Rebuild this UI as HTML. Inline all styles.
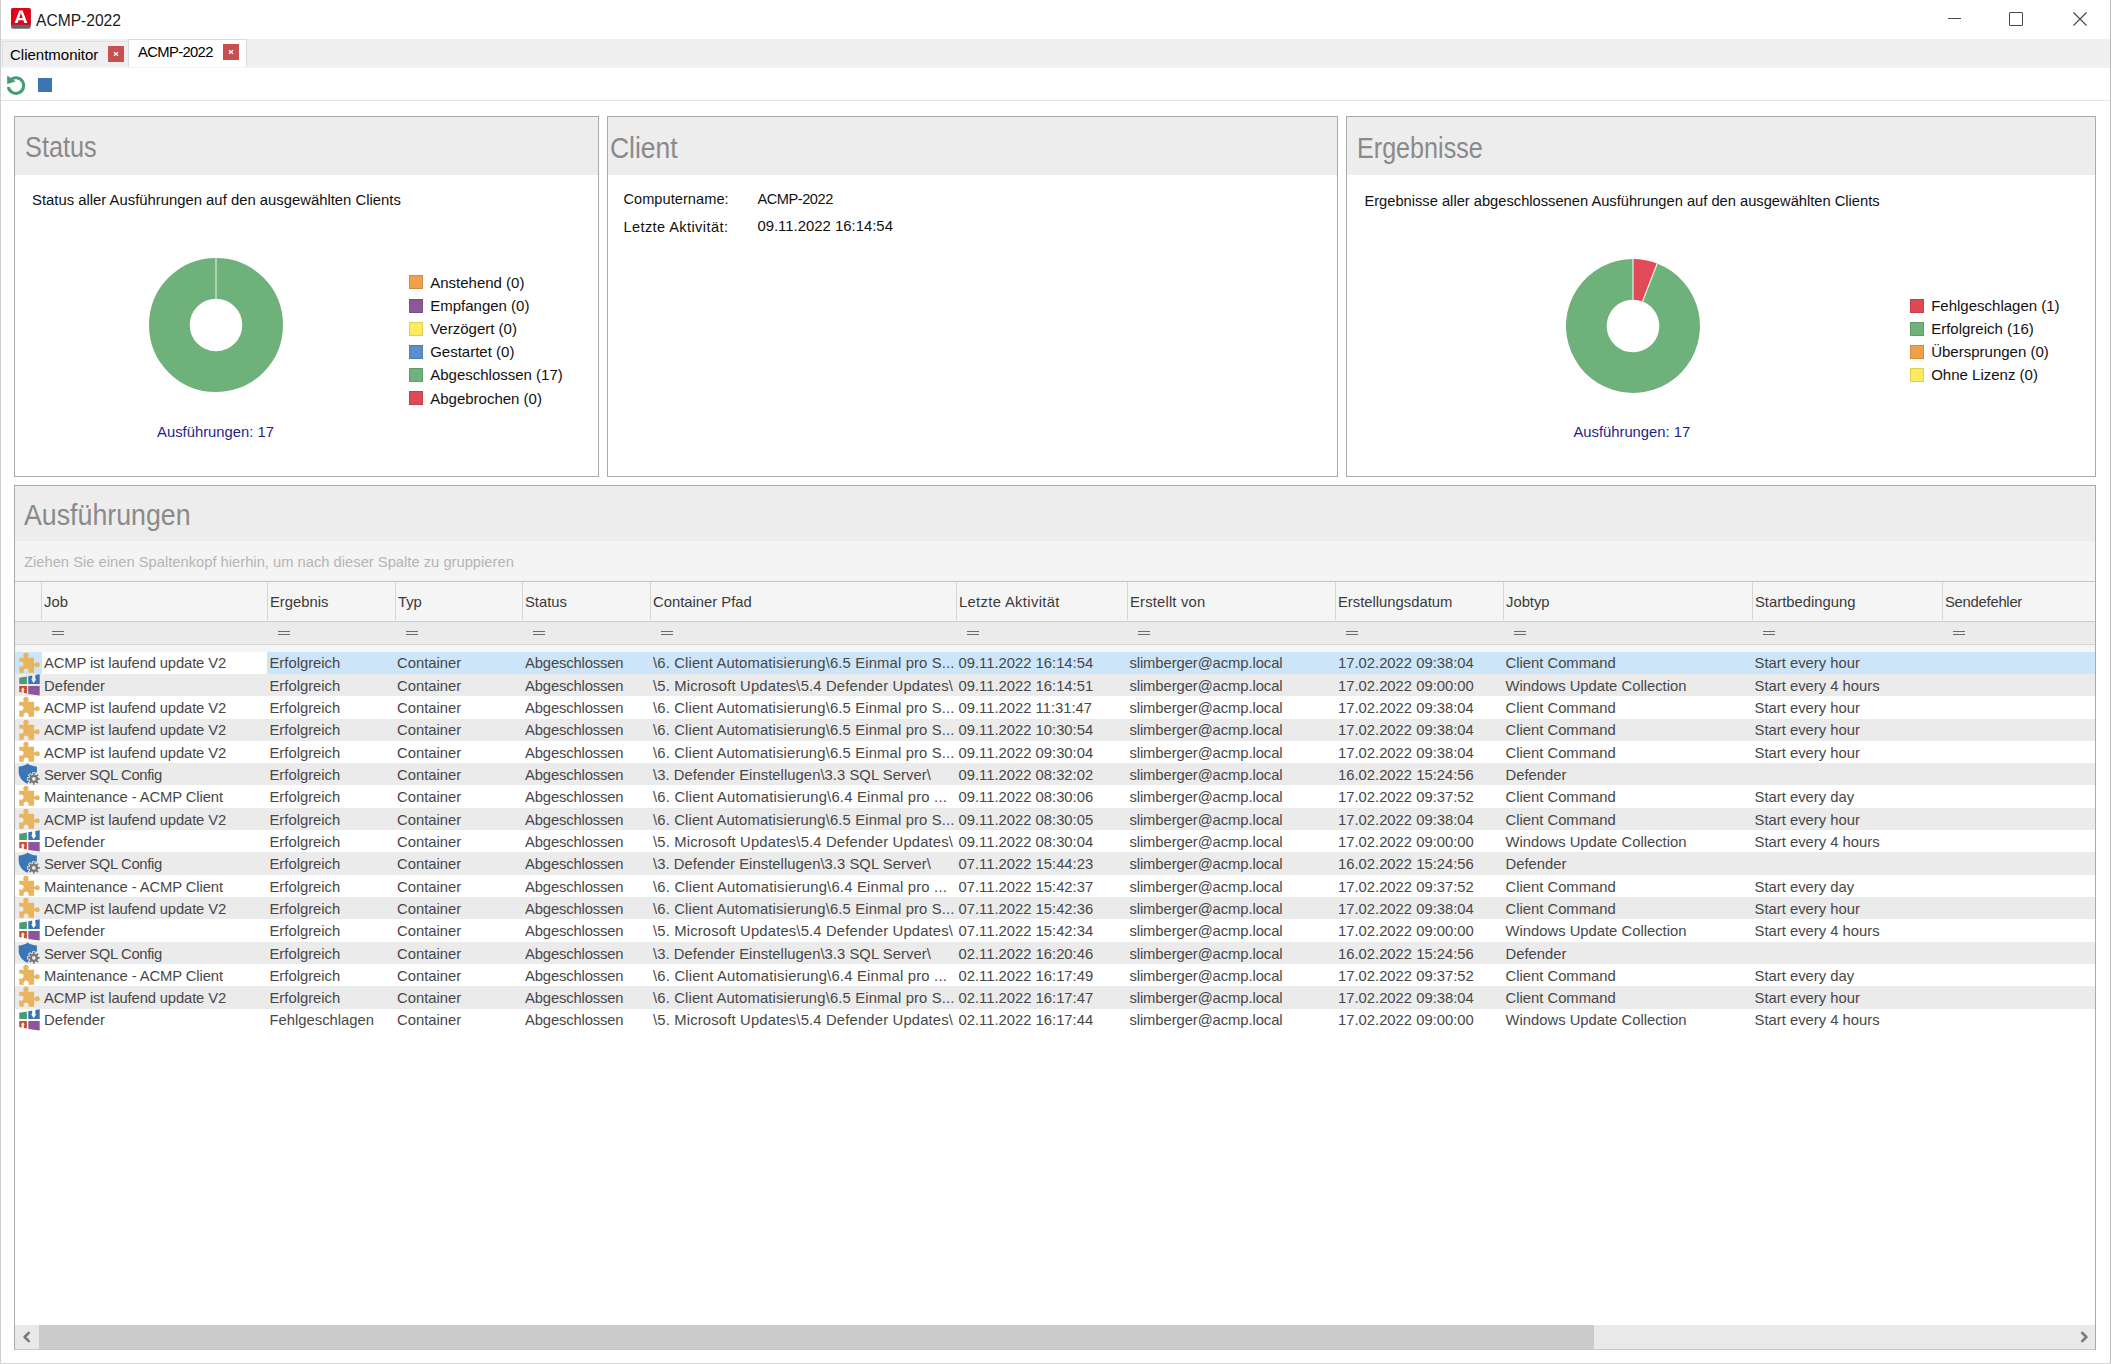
<!DOCTYPE html>
<html><head><meta charset="utf-8"><title>ACMP-2022</title>
<style>
html,body{margin:0;padding:0;}
body{width:2111px;height:1364px;position:relative;overflow:hidden;background:#fff;font-family:"Liberation Sans", sans-serif;}
body>div,body>svg{position:absolute;}
.t{white-space:nowrap;}
</style></head><body>
<div style="left:0px;top:0px;width:1px;height:1364px;background:#cfcfcf"></div>
<div style="left:2110px;top:0px;width:1px;height:1364px;background:#b8b8b8"></div>
<div style="left:0px;top:1363px;width:2111px;height:1px;background:#d6d6d6"></div>
<svg style="left:11px;top:8px" width="20" height="21" viewBox="0 0 20 21"><rect x="0" y="0" width="19.8" height="20.8" rx="2.2" fill="#656565"/><path d="M2.2 0 H17.6 A2.2 2.2 0 0 1 19.8 2.2 V16.8 H0 V2.2 A2.2 2.2 0 0 1 2.2 0 Z" fill="#e2001a"/><path d="M3.6 15 L8.3 2.6 L11.6 2.6 L16.3 15 L13.3 15 L12.4 12.3 L7.5 12.3 L6.6 15 Z M8.2 10 L11.7 10 L9.95 4.9 Z" fill="#fff"/></svg>
<div class="t" style="left:36px;top:12.79px;font-size:15.6px;line-height:15.6px;color:#1a1a1a;">ACMP-2022</div>
<div style="left:1948px;top:18px;width:13px;height:1.4px;background:#4a4a4a"></div>
<div style="left:2009px;top:12px;width:14px;height:14px;border:1.2px solid #4a4a4a;border-radius:1px;box-sizing:border-box"></div>
<svg style="left:2072px;top:11px" width="16" height="16" viewBox="0 0 16 16"><path d="M1.5 1.5 L14.5 14.5 M14.5 1.5 L1.5 14.5" stroke="#444" stroke-width="1.1"/></svg>
<div style="left:1px;top:39px;width:2109px;height:26px;background:#efefef"></div>
<div style="left:1px;top:65px;width:2109px;height:3px;background:#f3f3f3"></div>
<div style="left:2px;top:41px;width:126px;height:25px;background:#efefef;border-top:1px solid #e0e0e0;border-left:1px solid #e0e0e0;box-sizing:border-box"></div>
<div class="t" style="left:10px;top:47.00px;font-size:15px;line-height:15px;color:#000;">Clientmonitor</div>
<div style="left:108px;top:46px;width:16px;height:16px;background:#c94f4f"></div>
<svg style="left:108px;top:46px" width="16" height="16" viewBox="0 0 16 16"><path d="M6 6.3 L10 9.7 M10 6.3 L6 9.7" stroke="#fff" stroke-width="1.4"/></svg>
<div style="left:128px;top:39px;width:119px;height:28px;background:#fff;border:1px solid #dadada;border-bottom:none;box-sizing:border-box"></div>
<div class="t" style="left:138px;top:45.17px;font-size:14.8px;line-height:14.8px;color:#000;letter-spacing:-0.65px">ACMP-2022</div>
<div style="left:223px;top:44px;width:16px;height:16px;background:#c94f4f"></div>
<svg style="left:223px;top:44px" width="16" height="16" viewBox="0 0 16 16"><path d="M6 6.3 L10 9.7 M10 6.3 L6 9.7" stroke="#fff" stroke-width="1.4"/></svg>
<svg style="left:0px;top:70px" width="30" height="30" viewBox="0 70 30 30"><path d="M8.32 86.90 A7.75 7.75 0 1 0 11.18 79.44" fill="none" stroke="#479c74" stroke-width="3.1"/><path d="M7.2 75.5 L7.2 83.9 L15.7 81.4 Z" fill="#479c74"/></svg>
<div style="left:38px;top:78px;width:14px;height:14px;background:#3d74b2"></div>
<div style="left:1px;top:100px;width:2109px;height:1px;background:#e6e6e6"></div>
<div style="left:14px;top:116px;width:585px;height:361px;border:1px solid #aaaaaa;box-sizing:border-box;background:#fff"></div>
<div style="left:15px;top:117px;width:583px;height:58px;background:#ededed"></div>
<div style="left:607px;top:116px;width:731px;height:361px;border:1px solid #aaaaaa;box-sizing:border-box;background:#fff"></div>
<div style="left:608px;top:117px;width:729px;height:58px;background:#ededed"></div>
<div style="left:1346px;top:116px;width:750px;height:361px;border:1px solid #aaaaaa;box-sizing:border-box;background:#fff"></div>
<div style="left:1347px;top:117px;width:748px;height:58px;background:#ededed"></div>
<div class="t" style="left:24.8px;top:132.33px;font-size:29.5px;line-height:29.5px;color:#8a8a8a;transform:scaleX(0.858);transform-origin:0 0;">Status</div>
<div class="t" style="left:609.5px;top:132.63px;font-size:29.5px;line-height:29.5px;color:#8a8a8a;transform:scaleX(0.897);transform-origin:0 0;">Client</div>
<div class="t" style="left:1356.5px;top:132.63px;font-size:29.5px;line-height:29.5px;color:#8a8a8a;transform:scaleX(0.852);transform-origin:0 0;">Ergebnisse</div>
<div class="t" style="left:32px;top:193.13px;font-size:14.85px;line-height:14.85px;color:#111;">Status aller Ausführungen auf den ausgewählten Clients</div>
<div class="t" style="left:1364.4px;top:193.56px;font-size:14.7px;line-height:14.7px;color:#111;">Ergebnisse aller abgeschlossenen Ausführungen auf den ausgewählten Clients</div>
<div class="t" style="left:623.4px;top:191.64px;font-size:14.6px;line-height:14.6px;color:#111;letter-spacing:0.05px">Computername:</div>
<div class="t" style="left:757.4px;top:191.64px;font-size:14.6px;line-height:14.6px;color:#111;letter-spacing:-0.45px">ACMP-2022</div>
<div class="t" style="left:623.4px;top:219.64px;font-size:14.6px;line-height:14.6px;color:#111;letter-spacing:0.4px">Letzte Aktivität:</div>
<div class="t" style="left:757.4px;top:219.39px;font-size:14.9px;line-height:14.9px;color:#111;">09.11.2022 16:14:54</div>
<svg style="left:148.0px;top:257.0px" width="136" height="136" viewBox="-68 -68 136 136"><circle cx="0" cy="0" r="46.65" fill="none" stroke="#6eb17b" stroke-width="40.7"/><path d="M0 -67 L0 -26.3" stroke="#fff" stroke-width="0.9" opacity="0.95"/></svg>
<svg style="left:1564.6px;top:257.6px" width="136" height="136" viewBox="-68 -68 136 136"><path d="M24.203 -62.476 A67 67 0 1 1 0 -67 L0 -26.3 A26.3 26.3 0 1 0 9.501 -24.524 Z" fill="#6eb17b"/><path d="M0 -67 A67 67 0 0 1 24.203 -62.476 L9.501 -24.524 A26.3 26.3 0 0 0 0 -26.3 Z" fill="#e04b57"/><path d="M0 -67 L0 -26.3 M24.203 -62.476 L9.501 -24.524" stroke="#fff" stroke-width="1.1" opacity="0.95"/></svg>
<div class="t" style="left:157.1px;top:425.17px;font-size:14.8px;line-height:14.8px;color:#1f1f8f;">Ausführungen: 17</div>
<div class="t" style="left:1573.4px;top:424.87px;font-size:14.8px;line-height:14.8px;color:#1f1f8f;">Ausführungen: 17</div>
<div style="left:409px;top:275px;width:14px;height:14px;background:#f0a04b;box-sizing:border-box;border:1px solid rgba(0,0,0,0.12)"></div>
<div class="t" style="left:430.2px;top:275.30px;font-size:15.0px;line-height:15.0px;color:#111;">Anstehend (0)</div>
<div style="left:409px;top:299px;width:14px;height:14px;background:#8b5a96;box-sizing:border-box;border:1px solid rgba(0,0,0,0.12)"></div>
<div class="t" style="left:430.2px;top:298.30px;font-size:15.0px;line-height:15.0px;color:#111;">Empfangen (0)</div>
<div style="left:409px;top:322px;width:14px;height:14px;background:#fbec5d;box-sizing:border-box;border:1px solid rgba(0,0,0,0.12)"></div>
<div class="t" style="left:430.2px;top:321.30px;font-size:15.0px;line-height:15.0px;color:#111;">Verzögert (0)</div>
<div style="left:409px;top:345px;width:14px;height:14px;background:#5b8fd0;box-sizing:border-box;border:1px solid rgba(0,0,0,0.12)"></div>
<div class="t" style="left:430.2px;top:344.30px;font-size:15.0px;line-height:15.0px;color:#111;">Gestartet (0)</div>
<div style="left:409px;top:368px;width:14px;height:14px;background:#6eb17b;box-sizing:border-box;border:1px solid rgba(0,0,0,0.12)"></div>
<div class="t" style="left:430.2px;top:367.30px;font-size:15.0px;line-height:15.0px;color:#111;">Abgeschlossen (17)</div>
<div style="left:409px;top:391px;width:14px;height:14px;background:#dd4a55;box-sizing:border-box;border:1px solid rgba(0,0,0,0.12)"></div>
<div class="t" style="left:430.2px;top:391.30px;font-size:15.0px;line-height:15.0px;color:#111;">Abgebrochen (0)</div>
<div style="left:1910px;top:299px;width:14px;height:14px;background:#dd4a55;box-sizing:border-box;border:1px solid rgba(0,0,0,0.12)"></div>
<div class="t" style="left:1931.2px;top:298.30px;font-size:15.0px;line-height:15.0px;color:#111;">Fehlgeschlagen (1)</div>
<div style="left:1910px;top:322px;width:14px;height:14px;background:#6eb17b;box-sizing:border-box;border:1px solid rgba(0,0,0,0.12)"></div>
<div class="t" style="left:1931.2px;top:321.30px;font-size:15.0px;line-height:15.0px;color:#111;">Erfolgreich (16)</div>
<div style="left:1910px;top:345px;width:14px;height:14px;background:#f0a04b;box-sizing:border-box;border:1px solid rgba(0,0,0,0.12)"></div>
<div class="t" style="left:1931.2px;top:344.30px;font-size:15.0px;line-height:15.0px;color:#111;">Übersprungen (0)</div>
<div style="left:1910px;top:368px;width:14px;height:14px;background:#fbec5d;box-sizing:border-box;border:1px solid rgba(0,0,0,0.12)"></div>
<div class="t" style="left:1931.2px;top:367.30px;font-size:15.0px;line-height:15.0px;color:#111;">Ohne Lizenz (0)</div>
<div style="left:14px;top:485px;width:2082px;height:865px;border:1px solid #aaaaaa;box-sizing:border-box;background:#fff"></div>
<div style="left:15px;top:486px;width:2080px;height:55px;background:#ededed"></div>
<div class="t" style="left:24.4px;top:500.23px;font-size:29.5px;line-height:29.5px;color:#8a8a8a;transform:scaleX(0.907);transform-origin:0 0;">Ausführungen</div>
<div style="left:15px;top:541px;width:2080px;height:40px;background:#f4f4f4"></div>
<div class="t" style="left:24px;top:554.52px;font-size:14.74px;line-height:14.74px;color:#b4b4b4;">Ziehen Sie einen Spaltenkopf hierhin, um nach dieser Spalte zu gruppieren</div>
<div style="left:15px;top:581px;width:2080px;height:1px;background:#c4c4c4"></div>
<div style="left:15px;top:582px;width:2080px;height:39px;background:#f5f5f5"></div>
<div style="left:15px;top:621px;width:2080px;height:1px;background:#cccccc"></div>
<div style="left:15px;top:622px;width:2080px;height:22px;background:#ebebeb"></div>
<div style="left:15px;top:644px;width:2080px;height:1px;background:#d6d6d6"></div>
<div style="left:15px;top:645px;width:2080px;height:7px;background:#f5f5f5"></div>
<div style="left:41px;top:582px;width:1px;height:38px;background:#d6d6d6"></div>
<div style="left:267px;top:582px;width:1px;height:38px;background:#d6d6d6"></div>
<div style="left:395px;top:582px;width:1px;height:38px;background:#d6d6d6"></div>
<div style="left:522px;top:582px;width:1px;height:38px;background:#d6d6d6"></div>
<div style="left:650px;top:582px;width:1px;height:38px;background:#d6d6d6"></div>
<div style="left:956px;top:582px;width:1px;height:38px;background:#d6d6d6"></div>
<div style="left:1127px;top:582px;width:1px;height:38px;background:#d6d6d6"></div>
<div style="left:1335px;top:582px;width:1px;height:38px;background:#d6d6d6"></div>
<div style="left:1503px;top:582px;width:1px;height:38px;background:#d6d6d6"></div>
<div style="left:1752px;top:582px;width:1px;height:38px;background:#d6d6d6"></div>
<div style="left:1942px;top:582px;width:1px;height:38px;background:#d6d6d6"></div>
<div class="t" style="left:44px;top:595.47px;font-size:14.8px;line-height:14.8px;color:#3a3a3a;">Job</div>
<div style="left:52px;top:631px;width:12px;height:1px;background:#6a6a6a"></div>
<div style="left:52px;top:634px;width:12px;height:1px;background:#6a6a6a"></div>
<div class="t" style="left:270px;top:595.47px;font-size:14.8px;line-height:14.8px;color:#3a3a3a;">Ergebnis</div>
<div style="left:278px;top:631px;width:12px;height:1px;background:#6a6a6a"></div>
<div style="left:278px;top:634px;width:12px;height:1px;background:#6a6a6a"></div>
<div class="t" style="left:398px;top:595.47px;font-size:14.8px;line-height:14.8px;color:#3a3a3a;">Typ</div>
<div style="left:406px;top:631px;width:12px;height:1px;background:#6a6a6a"></div>
<div style="left:406px;top:634px;width:12px;height:1px;background:#6a6a6a"></div>
<div class="t" style="left:525px;top:595.47px;font-size:14.8px;line-height:14.8px;color:#3a3a3a;">Status</div>
<div style="left:533px;top:631px;width:12px;height:1px;background:#6a6a6a"></div>
<div style="left:533px;top:634px;width:12px;height:1px;background:#6a6a6a"></div>
<div class="t" style="left:653px;top:595.47px;font-size:14.8px;line-height:14.8px;color:#3a3a3a;">Container Pfad</div>
<div style="left:661px;top:631px;width:12px;height:1px;background:#6a6a6a"></div>
<div style="left:661px;top:634px;width:12px;height:1px;background:#6a6a6a"></div>
<div class="t" style="left:959px;top:595.47px;font-size:14.8px;line-height:14.8px;color:#3a3a3a;letter-spacing:0.33px">Letzte Aktivität</div>
<div style="left:967px;top:631px;width:12px;height:1px;background:#6a6a6a"></div>
<div style="left:967px;top:634px;width:12px;height:1px;background:#6a6a6a"></div>
<div class="t" style="left:1130px;top:595.47px;font-size:14.8px;line-height:14.8px;color:#3a3a3a;letter-spacing:0.18px">Erstellt von</div>
<div style="left:1138px;top:631px;width:12px;height:1px;background:#6a6a6a"></div>
<div style="left:1138px;top:634px;width:12px;height:1px;background:#6a6a6a"></div>
<div class="t" style="left:1338px;top:595.47px;font-size:14.8px;line-height:14.8px;color:#3a3a3a;">Erstellungsdatum</div>
<div style="left:1346px;top:631px;width:12px;height:1px;background:#6a6a6a"></div>
<div style="left:1346px;top:634px;width:12px;height:1px;background:#6a6a6a"></div>
<div class="t" style="left:1506px;top:595.47px;font-size:14.8px;line-height:14.8px;color:#3a3a3a;">Jobtyp</div>
<div style="left:1514px;top:631px;width:12px;height:1px;background:#6a6a6a"></div>
<div style="left:1514px;top:634px;width:12px;height:1px;background:#6a6a6a"></div>
<div class="t" style="left:1755px;top:595.47px;font-size:14.8px;line-height:14.8px;color:#3a3a3a;">Startbedingung</div>
<div style="left:1763px;top:631px;width:12px;height:1px;background:#6a6a6a"></div>
<div style="left:1763px;top:634px;width:12px;height:1px;background:#6a6a6a"></div>
<div class="t" style="left:1945px;top:595.47px;font-size:14.8px;line-height:14.8px;color:#3a3a3a;letter-spacing:-0.25px">Sendefehler</div>
<div style="left:1953px;top:631px;width:12px;height:1px;background:#6a6a6a"></div>
<div style="left:1953px;top:634px;width:12px;height:1px;background:#6a6a6a"></div>
<div style="left:15px;top:651.60px;width:2080px;height:22.31px;background:#cde5f8"></div>
<div style="left:42px;top:651.60px;width:225px;height:22.31px;background:#fff"></div>
<svg style="left:17.8px;top:651.60px" width="24" height="23" viewBox="-1 -1 24 23"><g fill="#e8b45e"><path d="M0.25 4.85 H15.1 V19.7 H9.2 A2.6 2.6 0 1 0 5.0 19.7 H0.25 V13.05 A2.6 2.6 0 1 0 0.25 9.2 Z"/><circle cx="6.95" cy="2.4" r="2.65"/><rect x="5.7" y="3.5" width="2.5" height="1.6"/><circle cx="18.2" cy="11.8" r="2.5"/><rect x="14.9" y="10.7" width="2" height="2.3"/></g></svg>
<div class="t" style="left:44px;top:656.47px;font-size:14.8px;line-height:14.8px;color:#474747;letter-spacing:-0.14px">ACMP ist laufend update V2</div>
<div class="t" style="left:269.5px;top:656.47px;font-size:14.8px;line-height:14.8px;color:#474747;">Erfolgreich</div>
<div class="t" style="left:397px;top:656.47px;font-size:14.8px;line-height:14.8px;color:#474747;">Container</div>
<div class="t" style="left:525px;top:656.47px;font-size:14.8px;line-height:14.8px;color:#474747;letter-spacing:-0.15px">Abgeschlossen</div>
<div class="t" style="left:653px;top:656.47px;font-size:14.8px;line-height:14.8px;color:#474747;letter-spacing:0.155px">\6. Client Automatisierung\6.5 Einmal pro S...</div>
<div class="t" style="left:958.5px;top:656.47px;font-size:14.8px;line-height:14.8px;color:#474747;">09.11.2022 16:14:54</div>
<div class="t" style="left:1129.4px;top:656.47px;font-size:14.8px;line-height:14.8px;color:#474747;letter-spacing:-0.08px">slimberger@acmp.local</div>
<div class="t" style="left:1338px;top:656.47px;font-size:14.8px;line-height:14.8px;color:#474747;">17.02.2022 09:38:04</div>
<div class="t" style="left:1505.5px;top:656.47px;font-size:14.8px;line-height:14.8px;color:#474747;">Client Command</div>
<div class="t" style="left:1754.6px;top:656.47px;font-size:14.8px;line-height:14.8px;color:#474747;">Start every hour</div>
<div style="left:15px;top:673.91px;width:2080px;height:22.31px;background:#ebebeb"></div>
<svg style="left:17.8px;top:673.91px" width="24" height="23" viewBox="-1 -1 24 23"><path fill="#4a9c78" d="M0.25 2.8 L7.9 1.6 V9 H0.25 Z"/><path fill="#3a74b6" d="M9.3 1.2 L13.2 0.52 V3.6 L12.3 4.5 L14.7 8.3 L17.1 4.5 L16.3 3.6 V-0.03 L20.7 -0.8 V9 H9.3 Z"/><path fill="#d14a2a" d="M0.25 10.9 H7.9 V18.4 L4.8 17.9 V15.4 L5.6 14.6 L3.9 12.3 L2.1 14.6 L2.7 15.4 V17.5 L0.25 17.1 Z"/><path fill="#8b55a0" d="M9.3 10.9 H20.7 V20.6 L9.3 19 Z"/></svg>
<div class="t" style="left:44px;top:678.78px;font-size:14.8px;line-height:14.8px;color:#474747;">Defender</div>
<div class="t" style="left:269.5px;top:678.78px;font-size:14.8px;line-height:14.8px;color:#474747;">Erfolgreich</div>
<div class="t" style="left:397px;top:678.78px;font-size:14.8px;line-height:14.8px;color:#474747;">Container</div>
<div class="t" style="left:525px;top:678.78px;font-size:14.8px;line-height:14.8px;color:#474747;letter-spacing:-0.15px">Abgeschlossen</div>
<div class="t" style="left:653px;top:678.78px;font-size:14.8px;line-height:14.8px;color:#474747;letter-spacing:0.17px">\5. Microsoft Updates\5.4 Defender Updates\</div>
<div class="t" style="left:958.5px;top:678.78px;font-size:14.8px;line-height:14.8px;color:#474747;">09.11.2022 16:14:51</div>
<div class="t" style="left:1129.4px;top:678.78px;font-size:14.8px;line-height:14.8px;color:#474747;letter-spacing:-0.08px">slimberger@acmp.local</div>
<div class="t" style="left:1338px;top:678.78px;font-size:14.8px;line-height:14.8px;color:#474747;">17.02.2022 09:00:00</div>
<div class="t" style="left:1505.5px;top:678.78px;font-size:14.8px;line-height:14.8px;color:#474747;">Windows Update Collection</div>
<div class="t" style="left:1754.6px;top:678.78px;font-size:14.8px;line-height:14.8px;color:#474747;">Start every 4 hours</div>
<div style="left:15px;top:696.22px;width:2080px;height:22.31px;background:#ffffff"></div>
<svg style="left:17.8px;top:696.22px" width="24" height="23" viewBox="-1 -1 24 23"><g fill="#e8b45e"><path d="M0.25 4.85 H15.1 V19.7 H9.2 A2.6 2.6 0 1 0 5.0 19.7 H0.25 V13.05 A2.6 2.6 0 1 0 0.25 9.2 Z"/><circle cx="6.95" cy="2.4" r="2.65"/><rect x="5.7" y="3.5" width="2.5" height="1.6"/><circle cx="18.2" cy="11.8" r="2.5"/><rect x="14.9" y="10.7" width="2" height="2.3"/></g></svg>
<div class="t" style="left:44px;top:701.09px;font-size:14.8px;line-height:14.8px;color:#474747;letter-spacing:-0.14px">ACMP ist laufend update V2</div>
<div class="t" style="left:269.5px;top:701.09px;font-size:14.8px;line-height:14.8px;color:#474747;">Erfolgreich</div>
<div class="t" style="left:397px;top:701.09px;font-size:14.8px;line-height:14.8px;color:#474747;">Container</div>
<div class="t" style="left:525px;top:701.09px;font-size:14.8px;line-height:14.8px;color:#474747;letter-spacing:-0.15px">Abgeschlossen</div>
<div class="t" style="left:653px;top:701.09px;font-size:14.8px;line-height:14.8px;color:#474747;letter-spacing:0.155px">\6. Client Automatisierung\6.5 Einmal pro S...</div>
<div class="t" style="left:958.5px;top:701.09px;font-size:14.8px;line-height:14.8px;color:#474747;">09.11.2022 11:31:47</div>
<div class="t" style="left:1129.4px;top:701.09px;font-size:14.8px;line-height:14.8px;color:#474747;letter-spacing:-0.08px">slimberger@acmp.local</div>
<div class="t" style="left:1338px;top:701.09px;font-size:14.8px;line-height:14.8px;color:#474747;">17.02.2022 09:38:04</div>
<div class="t" style="left:1505.5px;top:701.09px;font-size:14.8px;line-height:14.8px;color:#474747;">Client Command</div>
<div class="t" style="left:1754.6px;top:701.09px;font-size:14.8px;line-height:14.8px;color:#474747;">Start every hour</div>
<div style="left:15px;top:718.53px;width:2080px;height:22.31px;background:#ebebeb"></div>
<svg style="left:17.8px;top:718.53px" width="24" height="23" viewBox="-1 -1 24 23"><g fill="#e8b45e"><path d="M0.25 4.85 H15.1 V19.7 H9.2 A2.6 2.6 0 1 0 5.0 19.7 H0.25 V13.05 A2.6 2.6 0 1 0 0.25 9.2 Z"/><circle cx="6.95" cy="2.4" r="2.65"/><rect x="5.7" y="3.5" width="2.5" height="1.6"/><circle cx="18.2" cy="11.8" r="2.5"/><rect x="14.9" y="10.7" width="2" height="2.3"/></g></svg>
<div class="t" style="left:44px;top:723.40px;font-size:14.8px;line-height:14.8px;color:#474747;letter-spacing:-0.14px">ACMP ist laufend update V2</div>
<div class="t" style="left:269.5px;top:723.40px;font-size:14.8px;line-height:14.8px;color:#474747;">Erfolgreich</div>
<div class="t" style="left:397px;top:723.40px;font-size:14.8px;line-height:14.8px;color:#474747;">Container</div>
<div class="t" style="left:525px;top:723.40px;font-size:14.8px;line-height:14.8px;color:#474747;letter-spacing:-0.15px">Abgeschlossen</div>
<div class="t" style="left:653px;top:723.40px;font-size:14.8px;line-height:14.8px;color:#474747;letter-spacing:0.155px">\6. Client Automatisierung\6.5 Einmal pro S...</div>
<div class="t" style="left:958.5px;top:723.40px;font-size:14.8px;line-height:14.8px;color:#474747;">09.11.2022 10:30:54</div>
<div class="t" style="left:1129.4px;top:723.40px;font-size:14.8px;line-height:14.8px;color:#474747;letter-spacing:-0.08px">slimberger@acmp.local</div>
<div class="t" style="left:1338px;top:723.40px;font-size:14.8px;line-height:14.8px;color:#474747;">17.02.2022 09:38:04</div>
<div class="t" style="left:1505.5px;top:723.40px;font-size:14.8px;line-height:14.8px;color:#474747;">Client Command</div>
<div class="t" style="left:1754.6px;top:723.40px;font-size:14.8px;line-height:14.8px;color:#474747;">Start every hour</div>
<div style="left:15px;top:740.84px;width:2080px;height:22.31px;background:#ffffff"></div>
<svg style="left:17.8px;top:740.84px" width="24" height="23" viewBox="-1 -1 24 23"><g fill="#e8b45e"><path d="M0.25 4.85 H15.1 V19.7 H9.2 A2.6 2.6 0 1 0 5.0 19.7 H0.25 V13.05 A2.6 2.6 0 1 0 0.25 9.2 Z"/><circle cx="6.95" cy="2.4" r="2.65"/><rect x="5.7" y="3.5" width="2.5" height="1.6"/><circle cx="18.2" cy="11.8" r="2.5"/><rect x="14.9" y="10.7" width="2" height="2.3"/></g></svg>
<div class="t" style="left:44px;top:745.71px;font-size:14.8px;line-height:14.8px;color:#474747;letter-spacing:-0.14px">ACMP ist laufend update V2</div>
<div class="t" style="left:269.5px;top:745.71px;font-size:14.8px;line-height:14.8px;color:#474747;">Erfolgreich</div>
<div class="t" style="left:397px;top:745.71px;font-size:14.8px;line-height:14.8px;color:#474747;">Container</div>
<div class="t" style="left:525px;top:745.71px;font-size:14.8px;line-height:14.8px;color:#474747;letter-spacing:-0.15px">Abgeschlossen</div>
<div class="t" style="left:653px;top:745.71px;font-size:14.8px;line-height:14.8px;color:#474747;letter-spacing:0.155px">\6. Client Automatisierung\6.5 Einmal pro S...</div>
<div class="t" style="left:958.5px;top:745.71px;font-size:14.8px;line-height:14.8px;color:#474747;">09.11.2022 09:30:04</div>
<div class="t" style="left:1129.4px;top:745.71px;font-size:14.8px;line-height:14.8px;color:#474747;letter-spacing:-0.08px">slimberger@acmp.local</div>
<div class="t" style="left:1338px;top:745.71px;font-size:14.8px;line-height:14.8px;color:#474747;">17.02.2022 09:38:04</div>
<div class="t" style="left:1505.5px;top:745.71px;font-size:14.8px;line-height:14.8px;color:#474747;">Client Command</div>
<div class="t" style="left:1754.6px;top:745.71px;font-size:14.8px;line-height:14.8px;color:#474747;">Start every hour</div>
<div style="left:15px;top:763.15px;width:2080px;height:22.31px;background:#ebebeb"></div>
<svg style="left:17.8px;top:763.15px" width="24" height="23" viewBox="-1 -1 24 23"><path fill="#3b76b7" d="M8.6 -0.5 C6.6 1.2 3.5 2.3 -0.3 2.6 V8 C-0.3 12.5 3 17.3 8.4 19.7 L17.9 8 V2.6 C14.2 2.3 10.8 1.2 8.6 -0.5 Z"/><path fill="#787878" stroke="#ebebeb" stroke-width="1.6" paint-order="stroke" d="M13.15 10.93 L13.98 10.68 L13.96 8.96 L15.64 8.96 L15.62 10.68 L16.45 10.93 L17.20 11.34 L18.41 10.11 L19.59 11.29 L18.36 12.50 L18.77 13.25 L19.02 14.08 L20.74 14.06 L20.74 15.74 L19.02 15.72 L18.77 16.55 L18.36 17.30 L19.59 18.51 L18.41 19.69 L17.20 18.46 L16.45 18.87 L15.62 19.12 L15.64 20.84 L13.96 20.84 L13.98 19.12 L13.15 18.87 L12.40 18.46 L11.19 19.69 L10.01 18.51 L11.24 17.30 L10.83 16.55 L10.58 15.72 L8.86 15.74 L8.86 14.06 L10.58 14.08 L10.83 13.25 L11.24 12.50 L10.01 11.29 L11.19 10.11 L12.40 11.34 Z"/><circle cx="14.8" cy="14.9" r="1.8" fill="#eeeeee"/></svg>
<div class="t" style="left:44px;top:768.02px;font-size:14.8px;line-height:14.8px;color:#474747;letter-spacing:-0.34px">Server SQL Config</div>
<div class="t" style="left:269.5px;top:768.02px;font-size:14.8px;line-height:14.8px;color:#474747;">Erfolgreich</div>
<div class="t" style="left:397px;top:768.02px;font-size:14.8px;line-height:14.8px;color:#474747;">Container</div>
<div class="t" style="left:525px;top:768.02px;font-size:14.8px;line-height:14.8px;color:#474747;letter-spacing:-0.15px">Abgeschlossen</div>
<div class="t" style="left:653px;top:768.02px;font-size:14.8px;line-height:14.8px;color:#474747;letter-spacing:0.05px">\3. Defender Einstellugen\3.3 SQL Server\</div>
<div class="t" style="left:958.5px;top:768.02px;font-size:14.8px;line-height:14.8px;color:#474747;">09.11.2022 08:32:02</div>
<div class="t" style="left:1129.4px;top:768.02px;font-size:14.8px;line-height:14.8px;color:#474747;letter-spacing:-0.08px">slimberger@acmp.local</div>
<div class="t" style="left:1338px;top:768.02px;font-size:14.8px;line-height:14.8px;color:#474747;">16.02.2022 15:24:56</div>
<div class="t" style="left:1505.5px;top:768.02px;font-size:14.8px;line-height:14.8px;color:#474747;">Defender</div>
<div style="left:15px;top:785.46px;width:2080px;height:22.31px;background:#ffffff"></div>
<svg style="left:17.8px;top:785.46px" width="24" height="23" viewBox="-1 -1 24 23"><g fill="#e8b45e"><path d="M0.25 4.85 H15.1 V19.7 H9.2 A2.6 2.6 0 1 0 5.0 19.7 H0.25 V13.05 A2.6 2.6 0 1 0 0.25 9.2 Z"/><circle cx="6.95" cy="2.4" r="2.65"/><rect x="5.7" y="3.5" width="2.5" height="1.6"/><circle cx="18.2" cy="11.8" r="2.5"/><rect x="14.9" y="10.7" width="2" height="2.3"/></g></svg>
<div class="t" style="left:44px;top:790.33px;font-size:14.8px;line-height:14.8px;color:#474747;letter-spacing:-0.1px">Maintenance - ACMP Client</div>
<div class="t" style="left:269.5px;top:790.33px;font-size:14.8px;line-height:14.8px;color:#474747;">Erfolgreich</div>
<div class="t" style="left:397px;top:790.33px;font-size:14.8px;line-height:14.8px;color:#474747;">Container</div>
<div class="t" style="left:525px;top:790.33px;font-size:14.8px;line-height:14.8px;color:#474747;letter-spacing:-0.15px">Abgeschlossen</div>
<div class="t" style="left:653px;top:790.33px;font-size:14.8px;line-height:14.8px;color:#474747;letter-spacing:0.21px">\6. Client Automatisierung\6.4 Einmal pro ...</div>
<div class="t" style="left:958.5px;top:790.33px;font-size:14.8px;line-height:14.8px;color:#474747;">09.11.2022 08:30:06</div>
<div class="t" style="left:1129.4px;top:790.33px;font-size:14.8px;line-height:14.8px;color:#474747;letter-spacing:-0.08px">slimberger@acmp.local</div>
<div class="t" style="left:1338px;top:790.33px;font-size:14.8px;line-height:14.8px;color:#474747;">17.02.2022 09:37:52</div>
<div class="t" style="left:1505.5px;top:790.33px;font-size:14.8px;line-height:14.8px;color:#474747;">Client Command</div>
<div class="t" style="left:1754.6px;top:790.33px;font-size:14.8px;line-height:14.8px;color:#474747;">Start every day</div>
<div style="left:15px;top:807.77px;width:2080px;height:22.31px;background:#ebebeb"></div>
<svg style="left:17.8px;top:807.77px" width="24" height="23" viewBox="-1 -1 24 23"><g fill="#e8b45e"><path d="M0.25 4.85 H15.1 V19.7 H9.2 A2.6 2.6 0 1 0 5.0 19.7 H0.25 V13.05 A2.6 2.6 0 1 0 0.25 9.2 Z"/><circle cx="6.95" cy="2.4" r="2.65"/><rect x="5.7" y="3.5" width="2.5" height="1.6"/><circle cx="18.2" cy="11.8" r="2.5"/><rect x="14.9" y="10.7" width="2" height="2.3"/></g></svg>
<div class="t" style="left:44px;top:812.64px;font-size:14.8px;line-height:14.8px;color:#474747;letter-spacing:-0.14px">ACMP ist laufend update V2</div>
<div class="t" style="left:269.5px;top:812.64px;font-size:14.8px;line-height:14.8px;color:#474747;">Erfolgreich</div>
<div class="t" style="left:397px;top:812.64px;font-size:14.8px;line-height:14.8px;color:#474747;">Container</div>
<div class="t" style="left:525px;top:812.64px;font-size:14.8px;line-height:14.8px;color:#474747;letter-spacing:-0.15px">Abgeschlossen</div>
<div class="t" style="left:653px;top:812.64px;font-size:14.8px;line-height:14.8px;color:#474747;letter-spacing:0.155px">\6. Client Automatisierung\6.5 Einmal pro S...</div>
<div class="t" style="left:958.5px;top:812.64px;font-size:14.8px;line-height:14.8px;color:#474747;">09.11.2022 08:30:05</div>
<div class="t" style="left:1129.4px;top:812.64px;font-size:14.8px;line-height:14.8px;color:#474747;letter-spacing:-0.08px">slimberger@acmp.local</div>
<div class="t" style="left:1338px;top:812.64px;font-size:14.8px;line-height:14.8px;color:#474747;">17.02.2022 09:38:04</div>
<div class="t" style="left:1505.5px;top:812.64px;font-size:14.8px;line-height:14.8px;color:#474747;">Client Command</div>
<div class="t" style="left:1754.6px;top:812.64px;font-size:14.8px;line-height:14.8px;color:#474747;">Start every hour</div>
<div style="left:15px;top:830.08px;width:2080px;height:22.31px;background:#ffffff"></div>
<svg style="left:17.8px;top:830.08px" width="24" height="23" viewBox="-1 -1 24 23"><path fill="#4a9c78" d="M0.25 2.8 L7.9 1.6 V9 H0.25 Z"/><path fill="#3a74b6" d="M9.3 1.2 L13.2 0.52 V3.6 L12.3 4.5 L14.7 8.3 L17.1 4.5 L16.3 3.6 V-0.03 L20.7 -0.8 V9 H9.3 Z"/><path fill="#d14a2a" d="M0.25 10.9 H7.9 V18.4 L4.8 17.9 V15.4 L5.6 14.6 L3.9 12.3 L2.1 14.6 L2.7 15.4 V17.5 L0.25 17.1 Z"/><path fill="#8b55a0" d="M9.3 10.9 H20.7 V20.6 L9.3 19 Z"/></svg>
<div class="t" style="left:44px;top:834.95px;font-size:14.8px;line-height:14.8px;color:#474747;">Defender</div>
<div class="t" style="left:269.5px;top:834.95px;font-size:14.8px;line-height:14.8px;color:#474747;">Erfolgreich</div>
<div class="t" style="left:397px;top:834.95px;font-size:14.8px;line-height:14.8px;color:#474747;">Container</div>
<div class="t" style="left:525px;top:834.95px;font-size:14.8px;line-height:14.8px;color:#474747;letter-spacing:-0.15px">Abgeschlossen</div>
<div class="t" style="left:653px;top:834.95px;font-size:14.8px;line-height:14.8px;color:#474747;letter-spacing:0.17px">\5. Microsoft Updates\5.4 Defender Updates\</div>
<div class="t" style="left:958.5px;top:834.95px;font-size:14.8px;line-height:14.8px;color:#474747;">09.11.2022 08:30:04</div>
<div class="t" style="left:1129.4px;top:834.95px;font-size:14.8px;line-height:14.8px;color:#474747;letter-spacing:-0.08px">slimberger@acmp.local</div>
<div class="t" style="left:1338px;top:834.95px;font-size:14.8px;line-height:14.8px;color:#474747;">17.02.2022 09:00:00</div>
<div class="t" style="left:1505.5px;top:834.95px;font-size:14.8px;line-height:14.8px;color:#474747;">Windows Update Collection</div>
<div class="t" style="left:1754.6px;top:834.95px;font-size:14.8px;line-height:14.8px;color:#474747;">Start every 4 hours</div>
<div style="left:15px;top:852.39px;width:2080px;height:22.31px;background:#ebebeb"></div>
<svg style="left:17.8px;top:852.39px" width="24" height="23" viewBox="-1 -1 24 23"><path fill="#3b76b7" d="M8.6 -0.5 C6.6 1.2 3.5 2.3 -0.3 2.6 V8 C-0.3 12.5 3 17.3 8.4 19.7 L17.9 8 V2.6 C14.2 2.3 10.8 1.2 8.6 -0.5 Z"/><path fill="#787878" stroke="#ebebeb" stroke-width="1.6" paint-order="stroke" d="M13.15 10.93 L13.98 10.68 L13.96 8.96 L15.64 8.96 L15.62 10.68 L16.45 10.93 L17.20 11.34 L18.41 10.11 L19.59 11.29 L18.36 12.50 L18.77 13.25 L19.02 14.08 L20.74 14.06 L20.74 15.74 L19.02 15.72 L18.77 16.55 L18.36 17.30 L19.59 18.51 L18.41 19.69 L17.20 18.46 L16.45 18.87 L15.62 19.12 L15.64 20.84 L13.96 20.84 L13.98 19.12 L13.15 18.87 L12.40 18.46 L11.19 19.69 L10.01 18.51 L11.24 17.30 L10.83 16.55 L10.58 15.72 L8.86 15.74 L8.86 14.06 L10.58 14.08 L10.83 13.25 L11.24 12.50 L10.01 11.29 L11.19 10.11 L12.40 11.34 Z"/><circle cx="14.8" cy="14.9" r="1.8" fill="#eeeeee"/></svg>
<div class="t" style="left:44px;top:857.26px;font-size:14.8px;line-height:14.8px;color:#474747;letter-spacing:-0.34px">Server SQL Config</div>
<div class="t" style="left:269.5px;top:857.26px;font-size:14.8px;line-height:14.8px;color:#474747;">Erfolgreich</div>
<div class="t" style="left:397px;top:857.26px;font-size:14.8px;line-height:14.8px;color:#474747;">Container</div>
<div class="t" style="left:525px;top:857.26px;font-size:14.8px;line-height:14.8px;color:#474747;letter-spacing:-0.15px">Abgeschlossen</div>
<div class="t" style="left:653px;top:857.26px;font-size:14.8px;line-height:14.8px;color:#474747;letter-spacing:0.05px">\3. Defender Einstellugen\3.3 SQL Server\</div>
<div class="t" style="left:958.5px;top:857.26px;font-size:14.8px;line-height:14.8px;color:#474747;">07.11.2022 15:44:23</div>
<div class="t" style="left:1129.4px;top:857.26px;font-size:14.8px;line-height:14.8px;color:#474747;letter-spacing:-0.08px">slimberger@acmp.local</div>
<div class="t" style="left:1338px;top:857.26px;font-size:14.8px;line-height:14.8px;color:#474747;">16.02.2022 15:24:56</div>
<div class="t" style="left:1505.5px;top:857.26px;font-size:14.8px;line-height:14.8px;color:#474747;">Defender</div>
<div style="left:15px;top:874.70px;width:2080px;height:22.31px;background:#ffffff"></div>
<svg style="left:17.8px;top:874.70px" width="24" height="23" viewBox="-1 -1 24 23"><g fill="#e8b45e"><path d="M0.25 4.85 H15.1 V19.7 H9.2 A2.6 2.6 0 1 0 5.0 19.7 H0.25 V13.05 A2.6 2.6 0 1 0 0.25 9.2 Z"/><circle cx="6.95" cy="2.4" r="2.65"/><rect x="5.7" y="3.5" width="2.5" height="1.6"/><circle cx="18.2" cy="11.8" r="2.5"/><rect x="14.9" y="10.7" width="2" height="2.3"/></g></svg>
<div class="t" style="left:44px;top:879.57px;font-size:14.8px;line-height:14.8px;color:#474747;letter-spacing:-0.1px">Maintenance - ACMP Client</div>
<div class="t" style="left:269.5px;top:879.57px;font-size:14.8px;line-height:14.8px;color:#474747;">Erfolgreich</div>
<div class="t" style="left:397px;top:879.57px;font-size:14.8px;line-height:14.8px;color:#474747;">Container</div>
<div class="t" style="left:525px;top:879.57px;font-size:14.8px;line-height:14.8px;color:#474747;letter-spacing:-0.15px">Abgeschlossen</div>
<div class="t" style="left:653px;top:879.57px;font-size:14.8px;line-height:14.8px;color:#474747;letter-spacing:0.21px">\6. Client Automatisierung\6.4 Einmal pro ...</div>
<div class="t" style="left:958.5px;top:879.57px;font-size:14.8px;line-height:14.8px;color:#474747;">07.11.2022 15:42:37</div>
<div class="t" style="left:1129.4px;top:879.57px;font-size:14.8px;line-height:14.8px;color:#474747;letter-spacing:-0.08px">slimberger@acmp.local</div>
<div class="t" style="left:1338px;top:879.57px;font-size:14.8px;line-height:14.8px;color:#474747;">17.02.2022 09:37:52</div>
<div class="t" style="left:1505.5px;top:879.57px;font-size:14.8px;line-height:14.8px;color:#474747;">Client Command</div>
<div class="t" style="left:1754.6px;top:879.57px;font-size:14.8px;line-height:14.8px;color:#474747;">Start every day</div>
<div style="left:15px;top:897.01px;width:2080px;height:22.31px;background:#ebebeb"></div>
<svg style="left:17.8px;top:897.01px" width="24" height="23" viewBox="-1 -1 24 23"><g fill="#e8b45e"><path d="M0.25 4.85 H15.1 V19.7 H9.2 A2.6 2.6 0 1 0 5.0 19.7 H0.25 V13.05 A2.6 2.6 0 1 0 0.25 9.2 Z"/><circle cx="6.95" cy="2.4" r="2.65"/><rect x="5.7" y="3.5" width="2.5" height="1.6"/><circle cx="18.2" cy="11.8" r="2.5"/><rect x="14.9" y="10.7" width="2" height="2.3"/></g></svg>
<div class="t" style="left:44px;top:901.88px;font-size:14.8px;line-height:14.8px;color:#474747;letter-spacing:-0.14px">ACMP ist laufend update V2</div>
<div class="t" style="left:269.5px;top:901.88px;font-size:14.8px;line-height:14.8px;color:#474747;">Erfolgreich</div>
<div class="t" style="left:397px;top:901.88px;font-size:14.8px;line-height:14.8px;color:#474747;">Container</div>
<div class="t" style="left:525px;top:901.88px;font-size:14.8px;line-height:14.8px;color:#474747;letter-spacing:-0.15px">Abgeschlossen</div>
<div class="t" style="left:653px;top:901.88px;font-size:14.8px;line-height:14.8px;color:#474747;letter-spacing:0.155px">\6. Client Automatisierung\6.5 Einmal pro S...</div>
<div class="t" style="left:958.5px;top:901.88px;font-size:14.8px;line-height:14.8px;color:#474747;">07.11.2022 15:42:36</div>
<div class="t" style="left:1129.4px;top:901.88px;font-size:14.8px;line-height:14.8px;color:#474747;letter-spacing:-0.08px">slimberger@acmp.local</div>
<div class="t" style="left:1338px;top:901.88px;font-size:14.8px;line-height:14.8px;color:#474747;">17.02.2022 09:38:04</div>
<div class="t" style="left:1505.5px;top:901.88px;font-size:14.8px;line-height:14.8px;color:#474747;">Client Command</div>
<div class="t" style="left:1754.6px;top:901.88px;font-size:14.8px;line-height:14.8px;color:#474747;">Start every hour</div>
<div style="left:15px;top:919.32px;width:2080px;height:22.31px;background:#ffffff"></div>
<svg style="left:17.8px;top:919.32px" width="24" height="23" viewBox="-1 -1 24 23"><path fill="#4a9c78" d="M0.25 2.8 L7.9 1.6 V9 H0.25 Z"/><path fill="#3a74b6" d="M9.3 1.2 L13.2 0.52 V3.6 L12.3 4.5 L14.7 8.3 L17.1 4.5 L16.3 3.6 V-0.03 L20.7 -0.8 V9 H9.3 Z"/><path fill="#d14a2a" d="M0.25 10.9 H7.9 V18.4 L4.8 17.9 V15.4 L5.6 14.6 L3.9 12.3 L2.1 14.6 L2.7 15.4 V17.5 L0.25 17.1 Z"/><path fill="#8b55a0" d="M9.3 10.9 H20.7 V20.6 L9.3 19 Z"/></svg>
<div class="t" style="left:44px;top:924.19px;font-size:14.8px;line-height:14.8px;color:#474747;">Defender</div>
<div class="t" style="left:269.5px;top:924.19px;font-size:14.8px;line-height:14.8px;color:#474747;">Erfolgreich</div>
<div class="t" style="left:397px;top:924.19px;font-size:14.8px;line-height:14.8px;color:#474747;">Container</div>
<div class="t" style="left:525px;top:924.19px;font-size:14.8px;line-height:14.8px;color:#474747;letter-spacing:-0.15px">Abgeschlossen</div>
<div class="t" style="left:653px;top:924.19px;font-size:14.8px;line-height:14.8px;color:#474747;letter-spacing:0.17px">\5. Microsoft Updates\5.4 Defender Updates\</div>
<div class="t" style="left:958.5px;top:924.19px;font-size:14.8px;line-height:14.8px;color:#474747;">07.11.2022 15:42:34</div>
<div class="t" style="left:1129.4px;top:924.19px;font-size:14.8px;line-height:14.8px;color:#474747;letter-spacing:-0.08px">slimberger@acmp.local</div>
<div class="t" style="left:1338px;top:924.19px;font-size:14.8px;line-height:14.8px;color:#474747;">17.02.2022 09:00:00</div>
<div class="t" style="left:1505.5px;top:924.19px;font-size:14.8px;line-height:14.8px;color:#474747;">Windows Update Collection</div>
<div class="t" style="left:1754.6px;top:924.19px;font-size:14.8px;line-height:14.8px;color:#474747;">Start every 4 hours</div>
<div style="left:15px;top:941.63px;width:2080px;height:22.31px;background:#ebebeb"></div>
<svg style="left:17.8px;top:941.63px" width="24" height="23" viewBox="-1 -1 24 23"><path fill="#3b76b7" d="M8.6 -0.5 C6.6 1.2 3.5 2.3 -0.3 2.6 V8 C-0.3 12.5 3 17.3 8.4 19.7 L17.9 8 V2.6 C14.2 2.3 10.8 1.2 8.6 -0.5 Z"/><path fill="#787878" stroke="#ebebeb" stroke-width="1.6" paint-order="stroke" d="M13.15 10.93 L13.98 10.68 L13.96 8.96 L15.64 8.96 L15.62 10.68 L16.45 10.93 L17.20 11.34 L18.41 10.11 L19.59 11.29 L18.36 12.50 L18.77 13.25 L19.02 14.08 L20.74 14.06 L20.74 15.74 L19.02 15.72 L18.77 16.55 L18.36 17.30 L19.59 18.51 L18.41 19.69 L17.20 18.46 L16.45 18.87 L15.62 19.12 L15.64 20.84 L13.96 20.84 L13.98 19.12 L13.15 18.87 L12.40 18.46 L11.19 19.69 L10.01 18.51 L11.24 17.30 L10.83 16.55 L10.58 15.72 L8.86 15.74 L8.86 14.06 L10.58 14.08 L10.83 13.25 L11.24 12.50 L10.01 11.29 L11.19 10.11 L12.40 11.34 Z"/><circle cx="14.8" cy="14.9" r="1.8" fill="#eeeeee"/></svg>
<div class="t" style="left:44px;top:946.50px;font-size:14.8px;line-height:14.8px;color:#474747;letter-spacing:-0.34px">Server SQL Config</div>
<div class="t" style="left:269.5px;top:946.50px;font-size:14.8px;line-height:14.8px;color:#474747;">Erfolgreich</div>
<div class="t" style="left:397px;top:946.50px;font-size:14.8px;line-height:14.8px;color:#474747;">Container</div>
<div class="t" style="left:525px;top:946.50px;font-size:14.8px;line-height:14.8px;color:#474747;letter-spacing:-0.15px">Abgeschlossen</div>
<div class="t" style="left:653px;top:946.50px;font-size:14.8px;line-height:14.8px;color:#474747;letter-spacing:0.05px">\3. Defender Einstellugen\3.3 SQL Server\</div>
<div class="t" style="left:958.5px;top:946.50px;font-size:14.8px;line-height:14.8px;color:#474747;">02.11.2022 16:20:46</div>
<div class="t" style="left:1129.4px;top:946.50px;font-size:14.8px;line-height:14.8px;color:#474747;letter-spacing:-0.08px">slimberger@acmp.local</div>
<div class="t" style="left:1338px;top:946.50px;font-size:14.8px;line-height:14.8px;color:#474747;">16.02.2022 15:24:56</div>
<div class="t" style="left:1505.5px;top:946.50px;font-size:14.8px;line-height:14.8px;color:#474747;">Defender</div>
<div style="left:15px;top:963.94px;width:2080px;height:22.31px;background:#ffffff"></div>
<svg style="left:17.8px;top:963.94px" width="24" height="23" viewBox="-1 -1 24 23"><g fill="#e8b45e"><path d="M0.25 4.85 H15.1 V19.7 H9.2 A2.6 2.6 0 1 0 5.0 19.7 H0.25 V13.05 A2.6 2.6 0 1 0 0.25 9.2 Z"/><circle cx="6.95" cy="2.4" r="2.65"/><rect x="5.7" y="3.5" width="2.5" height="1.6"/><circle cx="18.2" cy="11.8" r="2.5"/><rect x="14.9" y="10.7" width="2" height="2.3"/></g></svg>
<div class="t" style="left:44px;top:968.81px;font-size:14.8px;line-height:14.8px;color:#474747;letter-spacing:-0.1px">Maintenance - ACMP Client</div>
<div class="t" style="left:269.5px;top:968.81px;font-size:14.8px;line-height:14.8px;color:#474747;">Erfolgreich</div>
<div class="t" style="left:397px;top:968.81px;font-size:14.8px;line-height:14.8px;color:#474747;">Container</div>
<div class="t" style="left:525px;top:968.81px;font-size:14.8px;line-height:14.8px;color:#474747;letter-spacing:-0.15px">Abgeschlossen</div>
<div class="t" style="left:653px;top:968.81px;font-size:14.8px;line-height:14.8px;color:#474747;letter-spacing:0.21px">\6. Client Automatisierung\6.4 Einmal pro ...</div>
<div class="t" style="left:958.5px;top:968.81px;font-size:14.8px;line-height:14.8px;color:#474747;">02.11.2022 16:17:49</div>
<div class="t" style="left:1129.4px;top:968.81px;font-size:14.8px;line-height:14.8px;color:#474747;letter-spacing:-0.08px">slimberger@acmp.local</div>
<div class="t" style="left:1338px;top:968.81px;font-size:14.8px;line-height:14.8px;color:#474747;">17.02.2022 09:37:52</div>
<div class="t" style="left:1505.5px;top:968.81px;font-size:14.8px;line-height:14.8px;color:#474747;">Client Command</div>
<div class="t" style="left:1754.6px;top:968.81px;font-size:14.8px;line-height:14.8px;color:#474747;">Start every day</div>
<div style="left:15px;top:986.25px;width:2080px;height:22.31px;background:#ebebeb"></div>
<svg style="left:17.8px;top:986.25px" width="24" height="23" viewBox="-1 -1 24 23"><g fill="#e8b45e"><path d="M0.25 4.85 H15.1 V19.7 H9.2 A2.6 2.6 0 1 0 5.0 19.7 H0.25 V13.05 A2.6 2.6 0 1 0 0.25 9.2 Z"/><circle cx="6.95" cy="2.4" r="2.65"/><rect x="5.7" y="3.5" width="2.5" height="1.6"/><circle cx="18.2" cy="11.8" r="2.5"/><rect x="14.9" y="10.7" width="2" height="2.3"/></g></svg>
<div class="t" style="left:44px;top:991.12px;font-size:14.8px;line-height:14.8px;color:#474747;letter-spacing:-0.14px">ACMP ist laufend update V2</div>
<div class="t" style="left:269.5px;top:991.12px;font-size:14.8px;line-height:14.8px;color:#474747;">Erfolgreich</div>
<div class="t" style="left:397px;top:991.12px;font-size:14.8px;line-height:14.8px;color:#474747;">Container</div>
<div class="t" style="left:525px;top:991.12px;font-size:14.8px;line-height:14.8px;color:#474747;letter-spacing:-0.15px">Abgeschlossen</div>
<div class="t" style="left:653px;top:991.12px;font-size:14.8px;line-height:14.8px;color:#474747;letter-spacing:0.155px">\6. Client Automatisierung\6.5 Einmal pro S...</div>
<div class="t" style="left:958.5px;top:991.12px;font-size:14.8px;line-height:14.8px;color:#474747;">02.11.2022 16:17:47</div>
<div class="t" style="left:1129.4px;top:991.12px;font-size:14.8px;line-height:14.8px;color:#474747;letter-spacing:-0.08px">slimberger@acmp.local</div>
<div class="t" style="left:1338px;top:991.12px;font-size:14.8px;line-height:14.8px;color:#474747;">17.02.2022 09:38:04</div>
<div class="t" style="left:1505.5px;top:991.12px;font-size:14.8px;line-height:14.8px;color:#474747;">Client Command</div>
<div class="t" style="left:1754.6px;top:991.12px;font-size:14.8px;line-height:14.8px;color:#474747;">Start every hour</div>
<div style="left:15px;top:1008.56px;width:2080px;height:22.31px;background:#ffffff"></div>
<svg style="left:17.8px;top:1008.56px" width="24" height="23" viewBox="-1 -1 24 23"><path fill="#4a9c78" d="M0.25 2.8 L7.9 1.6 V9 H0.25 Z"/><path fill="#3a74b6" d="M9.3 1.2 L13.2 0.52 V3.6 L12.3 4.5 L14.7 8.3 L17.1 4.5 L16.3 3.6 V-0.03 L20.7 -0.8 V9 H9.3 Z"/><path fill="#d14a2a" d="M0.25 10.9 H7.9 V18.4 L4.8 17.9 V15.4 L5.6 14.6 L3.9 12.3 L2.1 14.6 L2.7 15.4 V17.5 L0.25 17.1 Z"/><path fill="#8b55a0" d="M9.3 10.9 H20.7 V20.6 L9.3 19 Z"/></svg>
<div class="t" style="left:44px;top:1013.43px;font-size:14.8px;line-height:14.8px;color:#474747;">Defender</div>
<div class="t" style="left:269.5px;top:1013.43px;font-size:14.8px;line-height:14.8px;color:#474747;">Fehlgeschlagen</div>
<div class="t" style="left:397px;top:1013.43px;font-size:14.8px;line-height:14.8px;color:#474747;">Container</div>
<div class="t" style="left:525px;top:1013.43px;font-size:14.8px;line-height:14.8px;color:#474747;letter-spacing:-0.15px">Abgeschlossen</div>
<div class="t" style="left:653px;top:1013.43px;font-size:14.8px;line-height:14.8px;color:#474747;letter-spacing:0.17px">\5. Microsoft Updates\5.4 Defender Updates\</div>
<div class="t" style="left:958.5px;top:1013.43px;font-size:14.8px;line-height:14.8px;color:#474747;">02.11.2022 16:17:44</div>
<div class="t" style="left:1129.4px;top:1013.43px;font-size:14.8px;line-height:14.8px;color:#474747;letter-spacing:-0.08px">slimberger@acmp.local</div>
<div class="t" style="left:1338px;top:1013.43px;font-size:14.8px;line-height:14.8px;color:#474747;">17.02.2022 09:00:00</div>
<div class="t" style="left:1505.5px;top:1013.43px;font-size:14.8px;line-height:14.8px;color:#474747;">Windows Update Collection</div>
<div class="t" style="left:1754.6px;top:1013.43px;font-size:14.8px;line-height:14.8px;color:#474747;">Start every 4 hours</div>
<div style="left:15px;top:1325px;width:2080px;height:24px;background:#e9e9e9"></div>
<div style="left:39px;top:1325px;width:1555px;height:24px;background:#cbcbcb"></div>
<div style="left:15px;top:1349px;width:2080px;height:1px;background:#c8c8c8"></div>
<svg style="left:20px;top:1330px" width="14" height="14" viewBox="0 0 14 14"><path d="M8.8 2.8 L4.6 7 L8.8 11.2" fill="none" stroke="#7a7a7a" stroke-width="2.6" stroke-linecap="round" stroke-linejoin="round"/></svg>
<svg style="left:2077px;top:1330px" width="14" height="14" viewBox="0 0 14 14"><path d="M5.2 2.8 L9.4 7 L5.2 11.2" fill="none" stroke="#7a7a7a" stroke-width="2.6" stroke-linecap="round" stroke-linejoin="round"/></svg>
</body></html>
